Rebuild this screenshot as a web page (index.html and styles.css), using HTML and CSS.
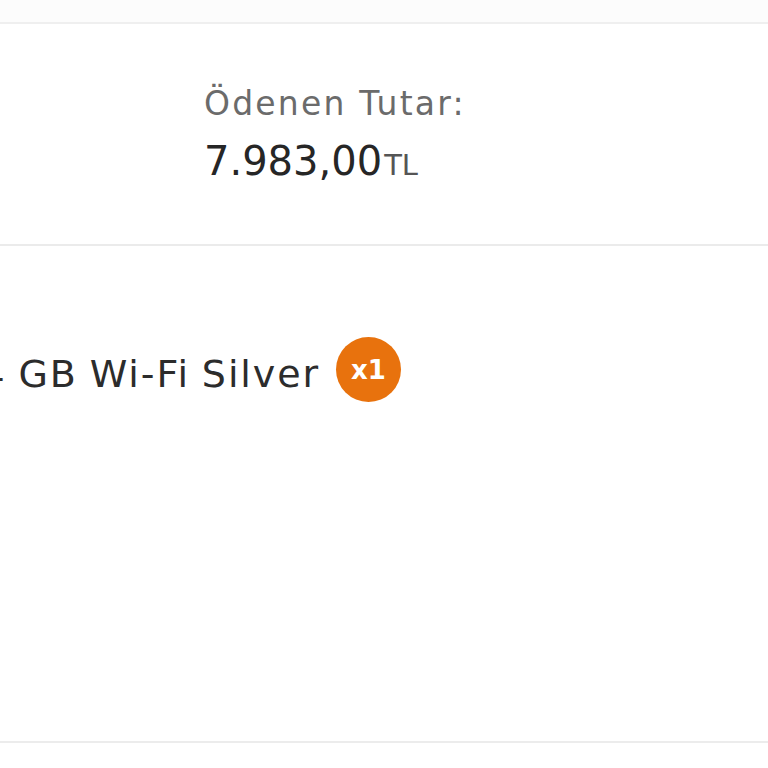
FILE: index.html
```html
<!DOCTYPE html>
<html lang="tr">
<head>
    <meta charset="UTF-8">
    <meta name="viewport" content="width=device-width, initial-scale=1.0">
    <link rel="stylesheet" href="styles.css">
</head>
<body>
    <div class="ust-serit"></div>
    <div class="siparis-ozet">
        <div class="ozet-kutu">
            <div class="ozet-baslik">Ödenen Tutar:</div>
            <div class="ozet-tutar">7.983,00<span class="para-birim">TL</span></div>
        </div>
    </div>
    <div class="urun-liste">
        <div class="urun-satir">
            <span class="urun-ad">Apple iPad 10. Nesil 64 GB Wi-Fi Silver</span>
            <span class="urun-adet">x1</span>
        </div>
    </div>
    <div class="alt-alan"></div>
</body>
</html>
```

FILE: styles.css
```css
body {
    margin: 0;
    background: #fff;
    font-family: "DejaVu Sans", Inter, sans-serif;
    overflow: hidden;
}
.ust-serit {
    height: 22px;
    background: #fcfcfc;
    border-bottom: 2px solid #efefef;
}
.siparis-ozet {
    height: 222px;
    border-bottom: 2px solid #ebebeb;
    box-sizing: border-box;
    padding: 59px 0 0 204px;
}
.ozet-baslik {
    font-size: 33px;
    letter-spacing: 2.2px;
    color: #6b6b6b;
    line-height: 42px;
}
.ozet-tutar {
    margin-top: 12px;
    font-size: 40px;
    color: #262626;
    line-height: 48px;
}
.para-birim {
    font-size: 29px;
    color: #555;
    margin-left: 2px;
}
.urun-liste {
    height: 497px;
    border-bottom: 2px solid #ececec;
    box-sizing: border-box;
    padding-top: 91px;
}
.urun-satir {
    display: flex;
    align-items: center;
    justify-content: flex-end;
    width: 401px;
    gap: 16px;
    white-space: nowrap;
}
.urun-ad {
    font-size: 38px;
    letter-spacing: 1.9px;
    word-spacing: -2px;
    color: #2c2c2c;
    margin-top: 8px;
}
.urun-adet {
    flex: none;
    width: 65px;
    height: 65px;
    border-radius: 50%;
    background: #e8720d;
    color: #fff;
    font-weight: 700;
    font-size: 26px;
    display: flex;
    align-items: center;
    justify-content: center;
}
.alt-alan {
    height: 30px;
}
```
